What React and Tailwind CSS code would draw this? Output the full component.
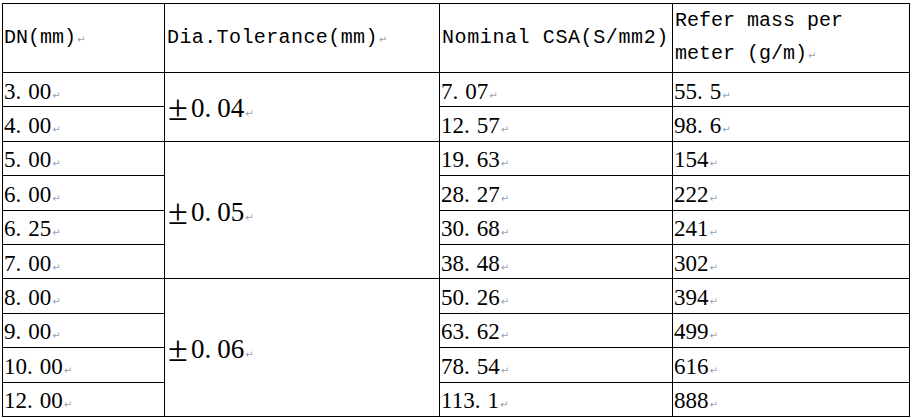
const groups = [
  {
    tol: '0.04',
    rows: [
      ['3.00', '7.07', '55.5'],
      ['4.00', '12.57', '98.6'],
    ],
  },
  {
    tol: '0.05',
    rows: [
      ['5.00', '19.63', '154'],
      ['6.00', '28.27', '222'],
      ['6.25', '30.68', '241'],
      ['7.00', '38.48', '302'],
    ],
  },
  {
    tol: '0.06',
    rows: [
      ['8.00', '50.26', '394'],
      ['9.00', '63.62', '499'],
      ['10.00', '78.54', '616'],
      ['12.00', '113.1', '888'],
    ],
  },
];

const Mark = () => (
  <span
    className="text-[10px] text-gray-400 ml-[1px] align-baseline"
    style={{ fontFamily: '"DejaVu Sans", sans-serif' }}
  >
    ↵
  </span>
);

// digits in the sheet have a wide gap after the decimal point
const Num = ({ v, gap = 'mr-[7px]' }) => {
  const [a, b] = v.split('.');
  if (b === undefined) return <>{v}</>;
  return (
    <>
      {a}
      <span className={gap}>.</span>
      {b}
    </>
  );
};

const App = () => {
  return (
    <div className="w-[912px] h-[418px] bg-white pt-[3px] pl-[2px]">
      <table className="border-collapse text-black leading-none">
        <colgroup>
          <col className="w-[162px]" />
          <col className="w-[275px]" />
          <col className="w-[233px]" />
          <col className="w-[237px]" />
        </colgroup>
        <thead
          className="text-[20px]"
          style={{ fontFamily: '"Liberation Mono", "DejaVu Sans Mono", monospace' }}
        >
          <tr className="h-[68px]">
            <th className="border border-black text-left font-normal px-[1px]">
              DN(mm)<Mark />
            </th>
            <th className="border border-black text-left font-normal px-[2px] tracking-[0.4px]">
              Dia.Tolerance(mm)<Mark />
            </th>
            <th className="border border-black text-left font-normal px-[2px] tracking-[0.6px]">
              Nominal CSA(S/mm2)
            </th>
            <th className="border border-black text-left font-normal px-[2px] leading-[33px] align-top">
              Refer mass per meter (g/m)<Mark />
            </th>
          </tr>
        </thead>
        <tbody
          className="text-[23px]"
          style={{ fontFamily: '"Liberation Serif", "DejaVu Serif", serif' }}
        >
          {groups.map((g) =>
            g.rows.map((r, i) => (
              <tr key={r[0]} className="h-[34.4px]">
                <td className="border border-black px-[1px] pt-[3px]">
                  <Num v={r[0]} />
                  <Mark />
                </td>
                {i === 0 && (
                  <td
                    rowSpan={g.rows.length}
                    className="border border-black px-[3px] pt-[4px] text-[27px]"
                  >
                    <span className="inline-block w-[23px] text-[36px] leading-[27px] align-bottom">
                      ±
                    </span>
                    <Num v={g.tol} gap="mr-[6px]" />
                    <Mark />
                  </td>
                )}
                <td className="border border-black px-[1px] pt-[3px]">
                  <Num v={r[1]} />
                  <Mark />
                </td>
                <td className="border border-black px-[1px] pt-[3px]">
                  <Num v={r[2]} />
                  <Mark />
                </td>
              </tr>
            ))
          )}
        </tbody>
      </table>
    </div>
  );
};

export default App;
